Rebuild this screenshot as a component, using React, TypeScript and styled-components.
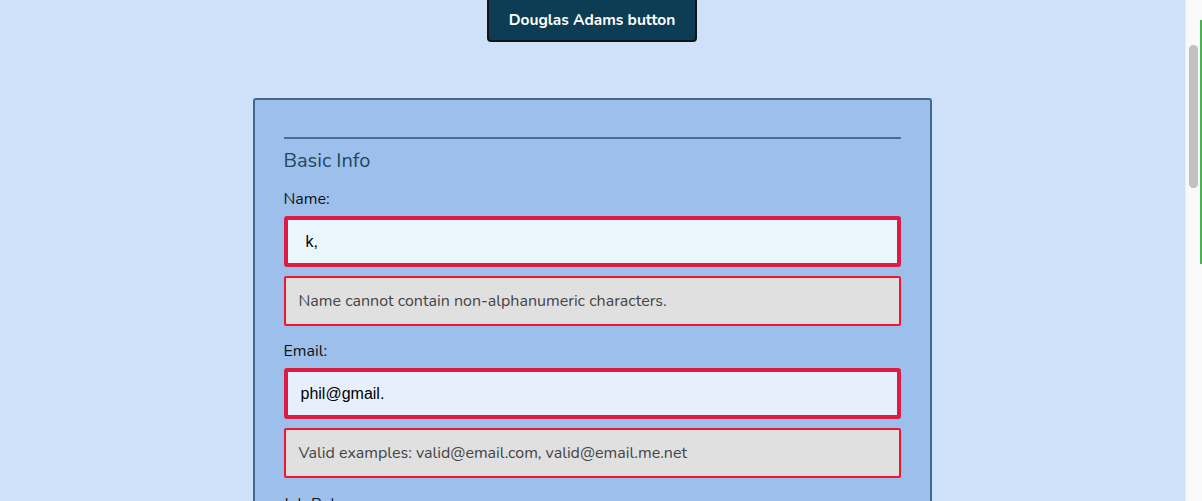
import styled, { createGlobalStyle } from "styled-components"

const Global = createGlobalStyle`
  html, body {
    margin: 0;
    padding: 0;
    background: #cfe1f8;
    font-family: "Nunito", Lato, "Open Sans", sans-serif;
  }
  * { box-sizing: border-box; }
`

const Page = styled.div`
  display: flex;
  flex-direction: column;
  align-items: center;
  padding-right: 18px;
  padding-bottom: 600px;
`

// window scrollbar as it shows in the screenshot
const ScrollTrack = styled.div`
  position: fixed;
  top: 0;
  right: 0;
  bottom: 0;
  width: 17px;
  background: #f9f9f9;
  border-left: 1px solid #ececec;
  &::before {
    content: "";
    position: absolute;
    top: 45px;
    left: 3px;
    width: 9px;
    height: 143px;
    border-radius: 5px;
    background: #c1c1c1;
  }
  &::after {
    content: "";
    position: absolute;
    top: 20px;
    right: 0;
    width: 2px;
    height: 244px;
    background: #4caf50;
  }
`

const TopButton = styled.button`
  margin-top: -4px;
  width: 210px;
  height: 46px;
  padding-top: 2px;
  background: #0c3d55;
  color: #fff;
  border: 2px solid #121212;
  border-radius: 4px;
  font-family: inherit;
  font-size: 15.5px;
  font-weight: 700;
`

const Card = styled.form`
  margin-top: 56px;
  width: 679px;
  padding: 37px 29px 40px;
  background: #9dbfec;
  border: 2px solid #3f6a8c;
  border-radius: 3px;
`

const Rule = styled.hr`
  margin: 0;
  border: none;
  border-top: 2px solid #456f90;
`

const Heading = styled.h2`
  margin: 10px 0 0;
  font-size: 20px;
  font-weight: 400;
  color: #1d4862;
  line-height: 24px;
`

const Label = styled.label<{ $gap?: number }>`
  display: block;
  margin-top: ${p => p.$gap ?? 16}px;
  font-size: 16px;
  color: #111;
  line-height: 20px;
`

const Input = styled.input<{ $bg: string; $pad: number }>`
  display: block;
  width: 100%;
  height: 51px;
  margin-top: 7px;
  padding: 0 ${p => p.$pad}px;
  background: ${p => p.$bg};
  border: 4px solid #dc1c44;
  border-radius: 3px;
  font-family: "Liberation Sans", Arial, sans-serif;
  font-size: 16px;
  color: #000;
  outline: none;
`

const ErrorBox = styled.div`
  margin-top: 9px;
  height: 50px;
  padding: 0 13px;
  display: flex;
  align-items: center;
  background: #e0e0e0;
  border: 2px solid #f5142b;
  border-radius: 2px;
  font-size: 16px;
  color: #444;
`

export default function App() {
  return (
    <>
      <Global />
      <Page>
        <TopButton type="button">Douglas Adams button</TopButton>
        <Card>
          <Rule />
          <Heading>Basic Info</Heading>
          <Label>Name:</Label>
          <Input $bg="#ebf6fc" $pad={18} defaultValue="k," />
          <ErrorBox>Name cannot contain non-alphanumeric characters.</ErrorBox>
          <Label $gap={15}>Email:</Label>
          <Input $bg="#e8effc" $pad={13} defaultValue="phil@gmail." />
          <ErrorBox>Valid examples: valid@email.com, valid@email.me.net</ErrorBox>
          <Label>Job Role:</Label>
        </Card>
      </Page>
      <ScrollTrack />
    </>
  )
}
